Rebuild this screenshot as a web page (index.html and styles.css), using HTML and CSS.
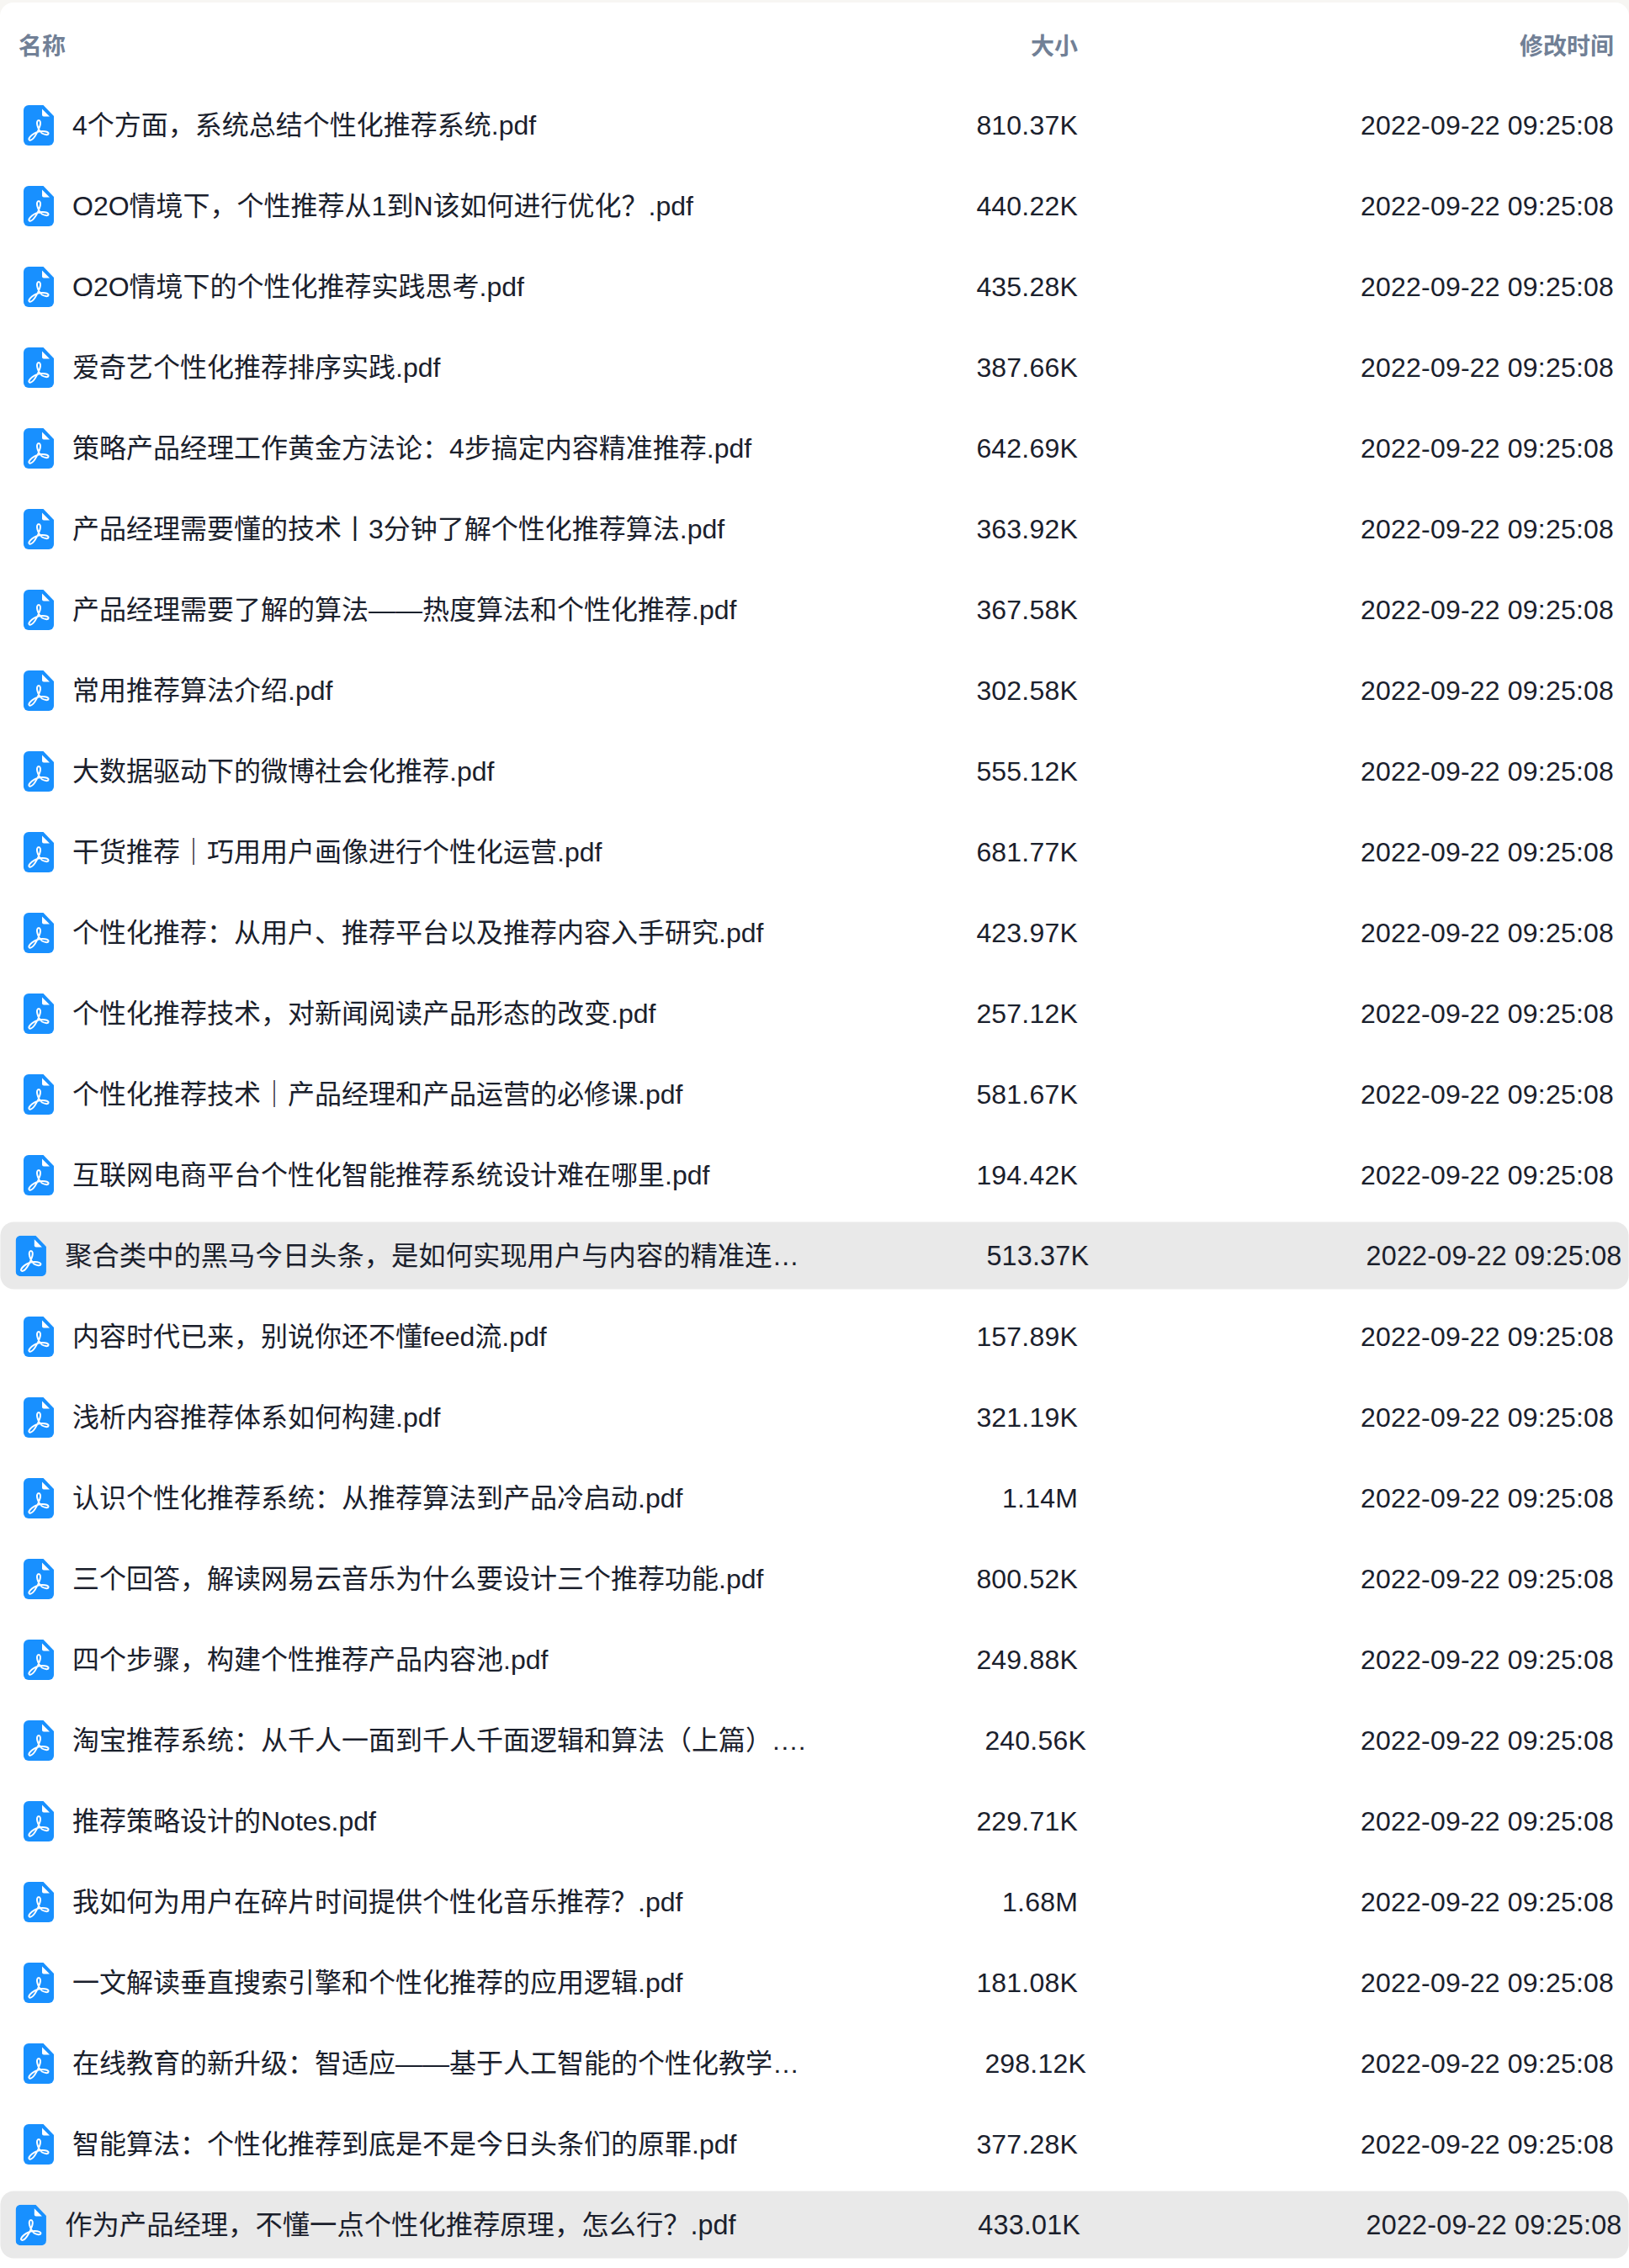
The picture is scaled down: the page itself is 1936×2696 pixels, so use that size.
FILE: index.html
```html
<!DOCTYPE html>
<html lang="zh-CN">
<head>
<meta charset="UTF-8">
<meta name="viewport" content="width=device-width, initial-scale=1.0">
<title>文件列表</title>
<link rel="stylesheet" href="styles.css">
</head>
<body>

  <svg class="icon-defs" aria-hidden="true">
    <symbol id="pdf" viewBox="0 0 36 48">
      <path fill="#1890ff" d="M6 0H23.500L36 13V42a6 6 0 0 1-6 6H6a6 6 0 0 1-6-6V6a6 6 0 0 1 6-6z"/>
      <path fill="#fff" d="M22 4.500L31 13.500H24a2 2 0 0 1-2-2z"/>
      <path fill="none" stroke="#fff" stroke-width="2" stroke-linejoin="round" d="M18 18c-2 0-2.500 3-1.500 6.500 1 3.500 3 7 5.500 9 2.500 1.500 7 2.500 7.500.5.500-2-3-3-7-3-4 0-9.500 2-12.500 4.500-3 2.500-4.500 5-3 6 2 1 4-1 6.500-4.500 2.500-3.500 5-9 6-12.500 1-3.500.500-6.500-1.500-6.500z"/>
    </symbol>
  </svg>

  <div class="file-list">
    <div class="list-head">
      <span class="col-name">名称</span>
      <span class="col-size">大小</span>
      <span class="col-time">修改时间</span>
    </div>

    <div class="list-body">
      <div class="file-row"><svg class="file-icon"><use href="#pdf"/></svg><span class="col-name">4个方面，系统总结个性化推荐系统.pdf</span><span class="col-size">810.37K</span><span class="col-time">2022-09-22 09:25:08</span></div>
      <div class="file-row"><svg class="file-icon"><use href="#pdf"/></svg><span class="col-name">O2O情境下，个性推荐从1到N该如何进行优化？.pdf</span><span class="col-size">440.22K</span><span class="col-time">2022-09-22 09:25:08</span></div>
      <div class="file-row"><svg class="file-icon"><use href="#pdf"/></svg><span class="col-name">O2O情境下的个性化推荐实践思考.pdf</span><span class="col-size">435.28K</span><span class="col-time">2022-09-22 09:25:08</span></div>
      <div class="file-row"><svg class="file-icon"><use href="#pdf"/></svg><span class="col-name">爱奇艺个性化推荐排序实践.pdf</span><span class="col-size">387.66K</span><span class="col-time">2022-09-22 09:25:08</span></div>
      <div class="file-row"><svg class="file-icon"><use href="#pdf"/></svg><span class="col-name">策略产品经理工作黄金方法论：4步搞定内容精准推荐.pdf</span><span class="col-size">642.69K</span><span class="col-time">2022-09-22 09:25:08</span></div>
      <div class="file-row"><svg class="file-icon"><use href="#pdf"/></svg><span class="col-name">产品经理需要懂的技术丨3分钟了解个性化推荐算法.pdf</span><span class="col-size">363.92K</span><span class="col-time">2022-09-22 09:25:08</span></div>
      <div class="file-row"><svg class="file-icon"><use href="#pdf"/></svg><span class="col-name">产品经理需要了解的算法——热度算法和个性化推荐.pdf</span><span class="col-size">367.58K</span><span class="col-time">2022-09-22 09:25:08</span></div>
      <div class="file-row"><svg class="file-icon"><use href="#pdf"/></svg><span class="col-name">常用推荐算法介绍.pdf</span><span class="col-size">302.58K</span><span class="col-time">2022-09-22 09:25:08</span></div>
      <div class="file-row"><svg class="file-icon"><use href="#pdf"/></svg><span class="col-name">大数据驱动下的微博社会化推荐.pdf</span><span class="col-size">555.12K</span><span class="col-time">2022-09-22 09:25:08</span></div>
      <div class="file-row"><svg class="file-icon"><use href="#pdf"/></svg><span class="col-name">干货推荐｜巧用用户画像进行个性化运营.pdf</span><span class="col-size">681.77K</span><span class="col-time">2022-09-22 09:25:08</span></div>
      <div class="file-row"><svg class="file-icon"><use href="#pdf"/></svg><span class="col-name">个性化推荐：从用户、推荐平台以及推荐内容入手研究.pdf</span><span class="col-size">423.97K</span><span class="col-time">2022-09-22 09:25:08</span></div>
      <div class="file-row"><svg class="file-icon"><use href="#pdf"/></svg><span class="col-name">个性化推荐技术，对新闻阅读产品形态的改变.pdf</span><span class="col-size">257.12K</span><span class="col-time">2022-09-22 09:25:08</span></div>
      <div class="file-row"><svg class="file-icon"><use href="#pdf"/></svg><span class="col-name">个性化推荐技术｜产品经理和产品运营的必修课.pdf</span><span class="col-size">581.67K</span><span class="col-time">2022-09-22 09:25:08</span></div>
      <div class="file-row"><svg class="file-icon"><use href="#pdf"/></svg><span class="col-name">互联网电商平台个性化智能推荐系统设计难在哪里.pdf</span><span class="col-size">194.42K</span><span class="col-time">2022-09-22 09:25:08</span></div>
      <div class="file-row is-hover is-long"><svg class="file-icon"><use href="#pdf"/></svg><span class="col-name">聚合类中的黑马今日头条，是如何实现用户与内容的精准连接的.pdf</span><span class="col-size">513.37K</span><span class="col-time">2022-09-22 09:25:08</span></div>
      <div class="file-row"><svg class="file-icon"><use href="#pdf"/></svg><span class="col-name">内容时代已来，别说你还不懂feed流.pdf</span><span class="col-size">157.89K</span><span class="col-time">2022-09-22 09:25:08</span></div>
      <div class="file-row"><svg class="file-icon"><use href="#pdf"/></svg><span class="col-name">浅析内容推荐体系如何构建.pdf</span><span class="col-size">321.19K</span><span class="col-time">2022-09-22 09:25:08</span></div>
      <div class="file-row"><svg class="file-icon"><use href="#pdf"/></svg><span class="col-name">认识个性化推荐系统：从推荐算法到产品冷启动.pdf</span><span class="col-size">1.14M</span><span class="col-time">2022-09-22 09:25:08</span></div>
      <div class="file-row"><svg class="file-icon"><use href="#pdf"/></svg><span class="col-name">三个回答，解读网易云音乐为什么要设计三个推荐功能.pdf</span><span class="col-size">800.52K</span><span class="col-time">2022-09-22 09:25:08</span></div>
      <div class="file-row"><svg class="file-icon"><use href="#pdf"/></svg><span class="col-name">四个步骤，构建个性推荐产品内容池.pdf</span><span class="col-size">249.88K</span><span class="col-time">2022-09-22 09:25:08</span></div>
      <div class="file-row is-long"><svg class="file-icon"><use href="#pdf"/></svg><span class="col-name">淘宝推荐系统：从千人一面到千人千面逻辑和算法（上篇）.pdf</span><span class="col-size">240.56K</span><span class="col-time">2022-09-22 09:25:08</span></div>
      <div class="file-row"><svg class="file-icon"><use href="#pdf"/></svg><span class="col-name">推荐策略设计的Notes.pdf</span><span class="col-size">229.71K</span><span class="col-time">2022-09-22 09:25:08</span></div>
      <div class="file-row"><svg class="file-icon"><use href="#pdf"/></svg><span class="col-name">我如何为用户在碎片时间提供个性化音乐推荐？.pdf</span><span class="col-size">1.68M</span><span class="col-time">2022-09-22 09:25:08</span></div>
      <div class="file-row"><svg class="file-icon"><use href="#pdf"/></svg><span class="col-name">一文解读垂直搜索引擎和个性化推荐的应用逻辑.pdf</span><span class="col-size">181.08K</span><span class="col-time">2022-09-22 09:25:08</span></div>
      <div class="file-row is-long"><svg class="file-icon"><use href="#pdf"/></svg><span class="col-name">在线教育的新升级：智适应——基于人工智能的个性化教学系统.pdf</span><span class="col-size">298.12K</span><span class="col-time">2022-09-22 09:25:08</span></div>
      <div class="file-row"><svg class="file-icon"><use href="#pdf"/></svg><span class="col-name">智能算法：个性化推荐到底是不是今日头条们的原罪.pdf</span><span class="col-size">377.28K</span><span class="col-time">2022-09-22 09:25:08</span></div>
      <div class="file-row is-hover"><svg class="file-icon"><use href="#pdf"/></svg><span class="col-name">作为产品经理，不懂一点个性化推荐原理，怎么行？.pdf</span><span class="col-size">433.01K</span><span class="col-time">2022-09-22 09:25:08</span></div>
    </div>
  </div>

</body>
</html>
```

FILE: styles.css
```css
* {
  box-sizing: border-box;
  margin: 0;
  padding: 0;
}

html,
body {
  height: 100%;
}

body {
  font-family: "Liberation Sans", "Noto Sans CJK SC", sans-serif;
  font-size: 32px;
  line-height: 48px;
  color: #1a202c;
  background-color: #f7f6f3;
  padding-top: 3px;
  overflow: hidden;
}

.icon-defs {
  display: none;
}

/* List */

.file-list {
  height: 100%;
  background-color: #fff;
  border-radius: 16px 16px 0 0;
  padding: 0 10px;
}

.list-head {
  display: flex;
  align-items: center;
  height: 98px;
  padding: 7px 8px 0 12px;
  font-size: 28px;
  font-weight: 700;
  color: #718096;
}

.list-head .col-name {
  flex: 0 0 939px;
}

.list-body {
  display: flex;
  flex-direction: column;
  gap: 17px;
  padding-top: 8px;
}

.file-row {
  display: flex;
  align-items: center;
  height: 79px;
  padding: 0 8px 0 18px;
  border-radius: 16px;
}

.file-row.is-hover {
  background-color: #e9e9e9;
  transform: scale(1.01);
}

.file-row .col-size,
.file-row .col-time {
  letter-spacing: 0.2px;
}

.file-icon {
  flex: 0 0 36px;
  width: 36px;
  height: 48px;
  margin-right: 22px;
}

.col-name {
  flex: 0 0 875px;
  white-space: nowrap;
  overflow: hidden;
  text-overflow: ellipsis;
}

.is-long .col-name {
  flex-basis: 885px;
}

.col-size {
  flex: 0 0 320px;
  text-align: right;
}

.col-time {
  flex: 1;
  text-align: right;
}
```
